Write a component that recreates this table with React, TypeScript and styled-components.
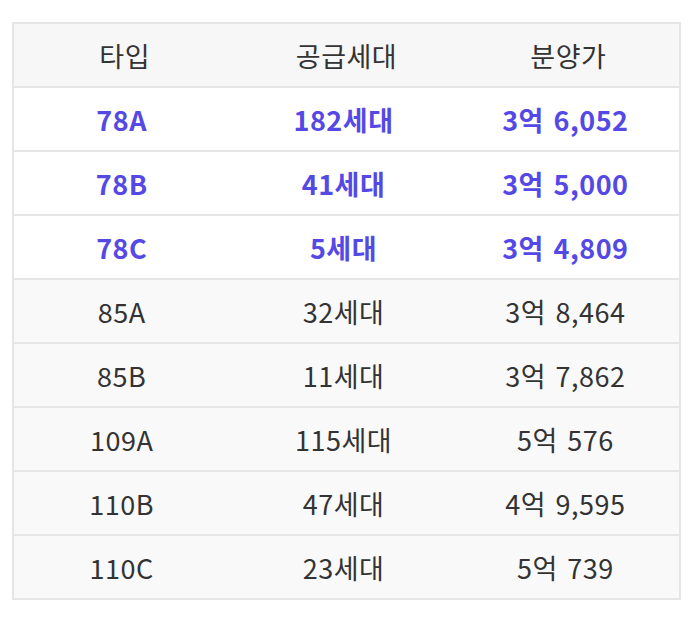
import styled, { createGlobalStyle } from 'styled-components'

const GlobalStyle = createGlobalStyle`
  body {
    margin: 0;
    background: #ffffff;
    font-family: 'Noto Sans CJK KR', 'Noto Sans', sans-serif;
  }
`

type Row = {
  type: string
  units: string
  price: string
  highlight?: boolean
}

const rows: Row[] = [
  { type: '78A', units: '182세대', price: '3억 6,052', highlight: true },
  { type: '78B', units: '41세대', price: '3억 5,000', highlight: true },
  { type: '78C', units: '5세대', price: '3억 4,809', highlight: true },
  { type: '85A', units: '32세대', price: '3억 8,464' },
  { type: '85B', units: '11세대', price: '3억 7,862' },
  { type: '109A', units: '115세대', price: '5억 576' },
  { type: '110B', units: '47세대', price: '4억 9,595' },
  { type: '110C', units: '23세대', price: '5억 739' },
]

const App = () => {
  return (
    <StyledPage>
      <GlobalStyle />
      <StyledTable>
        <thead>
          <tr>
            <StyledHeadCell>타입</StyledHeadCell>
            <StyledHeadCell>공급세대</StyledHeadCell>
            <StyledHeadCell>분양가</StyledHeadCell>
          </tr>
        </thead>
        <tbody>
          {rows.map(row => (
            <StyledRow key={row.type} $highlight={row.highlight}>
              <StyledCell $highlight={row.highlight}>{row.type}</StyledCell>
              <StyledCell $highlight={row.highlight}>{row.units}</StyledCell>
              <StyledCell $highlight={row.highlight}>{row.price}</StyledCell>
            </StyledRow>
          ))}
        </tbody>
      </StyledTable>
    </StyledPage>
  )
}

export default App

const StyledPage = styled.div`
  padding: 22px 19px 24px 12px;
`
const StyledTable = styled.table`
  width: 669px;
  border-collapse: collapse;
  table-layout: fixed;
  border: 2px solid #e6e6e6;
`
const StyledHeadCell = styled.th`
  height: 64px;
  padding: 3px 0 0 0;
  box-sizing: border-box;
  line-height: 1.2;
  background: #f7f7f7;
  border-bottom: 2px solid #e6e6e6;
  font-weight: 400;
  font-size: 27px;
  letter-spacing: 0.5px;
  color: #333333;
  text-align: center;
`
const StyledRow = styled.tr<{ $highlight?: boolean }>`
  background: ${({ $highlight }) => ($highlight ? '#ffffff' : '#f9f9f9')};
`
const StyledCell = styled.td<{ $highlight?: boolean }>`
  height: 64px;
  padding: 2px 6px 0 0;
  box-sizing: border-box;
  line-height: 1.2;
  border-bottom: 2px solid #e6e6e6;
  text-align: center;
  font-size: 27px;
  letter-spacing: 0.5px;
  word-spacing: 3px;
  font-weight: ${({ $highlight }) => ($highlight ? 700 : 400)};
  color: ${({ $highlight }) => ($highlight ? '#5549e6' : '#333333')};
`
